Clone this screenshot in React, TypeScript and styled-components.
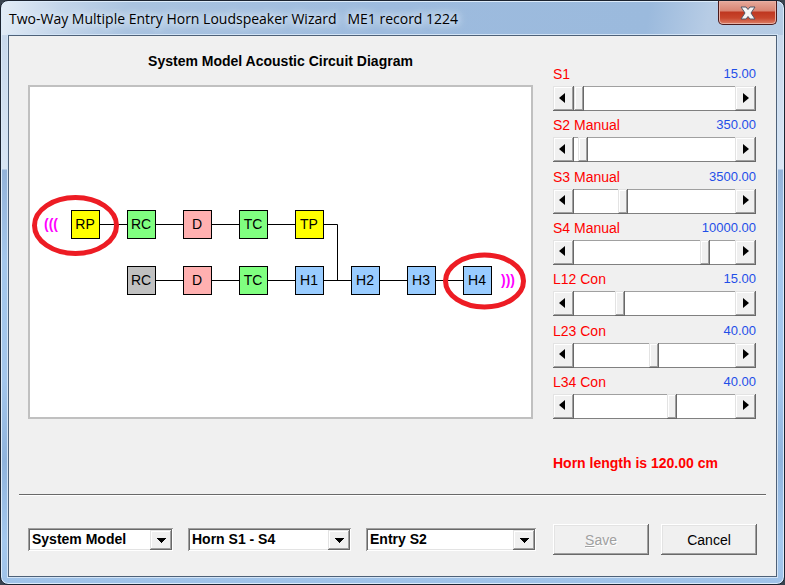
import { useState } from "react";
import styled, { createGlobalStyle } from "styled-components";

const GlobalStyle = createGlobalStyle`
  *, *::before, *::after { box-sizing: border-box; }
  body {
    margin: 0;
    background: #39434f;
    font-family: "Liberation Sans", Arial, sans-serif;
    font-size: 14px;
    color: #000;
  }
`;

const raised = `
  background: #f0f0f0;
  box-shadow:
    inset -1px -1px #696969,
    inset 1px 1px #e3e3e3,
    inset -2px -2px #a0a0a0,
    inset 2px 2px #fff;
`;

const Window = styled.main`
  display: flex;
  flex-direction: column;
  min-height: 100vh;
  padding: 0 7px 7px;
  border: 1px solid #1b2330;
  border-radius: 8px;
  box-shadow: inset 0 0 0 1px #dcebfa;
  background:
    linear-gradient(100deg, #e4edf7 0, #c3d5ea 60px, #a9c3e0 130px, #9dbbde 380px, #9bbadd 640px, #b7cce5 700px, #b5cbe4 100%) 0 0 / 100% 34px no-repeat,
    linear-gradient(#c4d5ea 0, #d9e6f4 168px, #93b2d8 169px, #a4c7ec 260px, #a3c6ec 380px, #8fb3dc 460px, #a4c8ee 540px, #9fc2e8 100%);
`;

const TitleBar = styled.header`
  display: flex;
  align-items: flex-start;
  justify-content: space-between;
  height: 34px;
`;

const Caption = styled.h1`
  margin: 0;
  padding-left: 1px;
  font: 400 14px/36px "Open Sans", "Noto Sans", sans-serif;
  white-space: pre;
  text-shadow: 0 0 8px #e8f1fb, 0 0 12px #dce9f7, 0 0 6px #dce9f7;
`;

const CloseButton = styled.button`
  display: grid;
  place-items: center;
  width: 59px;
  height: 24px;
  padding: 0;
  border: 1px solid #4a1a1c;
  border-top: 0;
  border-radius: 0 0 5px 5px;
  box-shadow: inset 0 0 0 1px #e9b0a4;
  background: linear-gradient(#e6a99b 0, #d98472 10px, #bf3620 11px, #c8452c 17px, #dd8069 100%);
`;

const Client = styled.div`
  flex: 1;
  display: flex;
  flex-direction: column;
  padding: 16px 0 20px;
  border: 1px solid #4e6178;
  box-shadow: 0 0 0 1px #d3e4f6;
  background: #f0f0f0;
`;

const Content = styled.div`
  display: grid;
  grid-template-columns: minmax(0, 1fr) 204px;
  gap: 20px;
  padding: 0 19px;
`;

const ModelPanel = styled.section`
  display: flex;
  flex-direction: column;
`;

const PanelTitle = styled.h2`
  margin: 0 0 15px;
  font-size: 14px;
  line-height: 18px;
  text-align: center;
`;

const DiagramBox = styled.div`
  flex: 1;
  border: 2px solid #c0c0c0;
  background: #fff;
`;

const DiagramSvg = styled.svg`
  display: block;
  width: 100%;
  font-size: 14px;
`;

const Controls = styled.section`
  display: flex;
  flex-direction: column;
  justify-content: space-between;
  height: 367px;
  padding: 10px 1px 0 0;
`;

const SliderHead = styled.div`
  display: flex;
  justify-content: space-between;
  line-height: 24px;
`;

const SliderLabel = styled.label`
  color: #f00;
`;

const SliderValue = styled.output`
  color: #1f4fe8;
  font-size: 13px;
`;

const ScrollBar = styled.div`
  display: flex;
  height: 25px;
`;

const ArrowButton = styled.button<{ $side: "left" | "right" }>`
  display: grid;
  place-items: center;
  width: 21px;
  padding: ${({ $side }) => ($side === "left" ? "0 3px 2px 0" : "0 0 2px 1px")};
  border: 0;
  ${raised}
`;

const Range = styled.input`
  flex: 1;
  min-width: 0;
  height: 25px;
  margin: 0;
  appearance: none;
  border: solid #a0a0a0;
  border-width: 1px 0;
  border-bottom-color: #808080;
  background: #fff;

  &::-webkit-slider-runnable-track {
    height: 25px;
    margin: -1px 0;
  }
  &::-webkit-slider-thumb {
    appearance: none;
    width: 10px;
    height: 25px;
    border-radius: 0;
    ${raised}
  }
`;

const Result = styled.p`
  margin: 35px 0 0;
  color: #f00;
  font-weight: 700;
  line-height: 18px;
`;

const Rule = styled.hr`
  width: calc(100% - 20px);
  height: 2px;
  margin: 22px 10px 28px;
  border: 0;
  border-top: 1px solid #696969;
  border-bottom: 1px solid #fff;
`;

const Footer = styled.footer`
  display: flex;
  align-items: center;
  gap: 17px;
  padding: 0 19px;
`;

const Selects = styled.div`
  flex: 1;
  display: grid;
  grid-template-columns: 145fr 163fr 170fr;
  gap: 15px;
`;

const Combo = styled.div`
  display: grid;
  grid-template-columns: 1fr 23px;
  height: 23px;
`;

const Select = styled.select`
  grid-area: 1 / 1 / 2 / 3;
  min-width: 0;
  padding: 0 24px 0 4px;
  appearance: none;
  border: 0;
  border-radius: 0;
  background: #fff;
  box-shadow:
    inset 1px 1px #a0a0a0,
    inset -1px -1px #fff,
    inset 2px 2px #696969,
    inset -2px -2px #e3e3e3;
  color: #000;
  font: 700 14px/23px "Liberation Sans", Arial, sans-serif;
`;

const ComboArrow = styled.span`
  grid-area: 1 / 2;
  display: grid;
  place-items: center;
  margin: 2px 1px 1px 0;
  pointer-events: none;
  ${raised}
`;

const Actions = styled.div`
  display: flex;
  gap: 12px;
`;

const ActionButton = styled.button`
  width: 96px;
  height: 31px;
  padding: 0;
  border: 0;
  background: #f0f0f0;
  box-shadow:
    inset -1px -1px #696969,
    inset 1px 1px #fff,
    inset -2px -2px #a0a0a0,
    inset 2px 2px #e3e3e3;
  color: #000;
  font: 400 14px "Liberation Sans", Arial, sans-serif;

  &:disabled {
    color: #a0a0a0;
    text-shadow: 1px 1px #fff;
  }
`;

type Parameter = { id: string; label: string; value: string; position: number };

const parameters: Parameter[] = [
  { id: "s1", label: "S1", value: "15.00", position: 0 },
  { id: "s2", label: "S2 Manual", value: "350.00", position: 4 },
  { id: "s3", label: "S3 Manual", value: "3500.00", position: 44 },
  { id: "s4", label: "S4 Manual", value: "10000.00", position: 126 },
  { id: "l12", label: "L12 Con", value: "15.00", position: 41 },
  { id: "l23", label: "L23 Con", value: "40.00", position: 75 },
  { id: "l34", label: "L34 Con", value: "40.00", position: 93 },
];

const TRAVEL = 151;

function ParameterSlider({ id, label, value, position }: Parameter) {
  const [pos, setPos] = useState(position);
  const step = (by: number) => setPos((p) => Math.min(TRAVEL, Math.max(0, p + by)));
  return (
    <div>
      <SliderHead>
        <SliderLabel htmlFor={id}>{label}</SliderLabel>
        <SliderValue htmlFor={id}>{value}</SliderValue>
      </SliderHead>
      <ScrollBar>
        <ArrowButton type="button" $side="left" aria-label={`Decrease ${label}`} onClick={() => step(-1)}>
          <svg width="6" height="10">
            <path d="M6 0V10L0 5Z" />
          </svg>
        </ArrowButton>
        <Range
          id={id}
          type="range"
          min={0}
          max={TRAVEL}
          value={pos}
          onChange={(e) => setPos(Number(e.target.value))}
        />
        <ArrowButton type="button" $side="right" aria-label={`Increase ${label}`} onClick={() => step(1)}>
          <svg width="6" height="10">
            <path d="M0 0V10L6 5Z" />
          </svg>
        </ArrowButton>
      </ScrollBar>
    </div>
  );
}

const YELLOW = "#ffff00";
const GREEN = "#80ff80";
const PINK = "#ffb0b0";
const BLUE = "#99ccff";
const GREY = "#c0c0c0";

const nodes = [
  { name: "RP", col: 0, row: 0, fill: YELLOW },
  { name: "RC", col: 1, row: 0, fill: GREEN },
  { name: "D", col: 2, row: 0, fill: PINK },
  { name: "TC", col: 3, row: 0, fill: GREEN },
  { name: "TP", col: 4, row: 0, fill: YELLOW },
  { name: "RC", col: 1, row: 1, fill: GREY },
  { name: "D", col: 2, row: 1, fill: PINK },
  { name: "TC", col: 3, row: 1, fill: GREEN },
  { name: "H1", col: 4, row: 1, fill: BLUE },
  { name: "H2", col: 5, row: 1, fill: BLUE },
  { name: "H3", col: 6, row: 1, fill: BLUE },
  { name: "H4", col: 7, row: 1, fill: BLUE },
];

function CircuitDiagram() {
  return (
    <DiagramSvg viewBox="0 0 501 329" role="img" aria-label="System model acoustic circuit diagram">
      <path d="M55.5 137.5H307.5V193.5M111.5 193.5H447.5" fill="none" stroke="#000" />
      {nodes.map(({ name, col, row, fill }) => (
        <g key={`${row}-${col}`} transform={`translate(${41 + col * 56} ${123 + row * 56})`}>
          <rect x="0.5" y="0.5" width="28" height="28" fill={fill} stroke="#000" />
          <text x="14" y="19" textAnchor="middle">
            {name}
          </text>
        </g>
      ))}
      <g fill="#f0f" fontWeight="700">
        <text x="14" y="142">(((</text>
        <text x="471" y="198">)))</text>
      </g>
      <g fill="none" stroke="#ed1c24" strokeWidth="5">
        <ellipse cx="45.5" cy="138.5" rx="41" ry="28" />
        <ellipse cx="454.5" cy="194" rx="39" ry="26" />
      </g>
    </DiagramSvg>
  );
}

function ComboBox({ label, options }: { label: string; options: string[] }) {
  return (
    <Combo>
      <Select aria-label={label} defaultValue={options[0]}>
        {options.map((option) => (
          <option key={option}>{option}</option>
        ))}
      </Select>
      <ComboArrow>
        <svg width="9" height="5" shapeRendering="crispEdges">
          <path d="M0 0H9L4.5 5Z" />
        </svg>
      </ComboArrow>
    </Combo>
  );
}

export default function App() {
  return (
    <>
      <GlobalStyle />
      <Window>
        <TitleBar>
          <Caption>Two-Way Multiple Entry Horn Loudspeaker Wizard   ME1 record 1224</Caption>
          <CloseButton type="button" aria-label="Close">
            <svg width="16" height="14" viewBox="0 0 16 14">
              <path
                d="M1 1H6L8 3.5L10 1H15L11 7L15 13H10L8 10.5L6 13H1L5 7Z"
                fill="#f5f5f5"
                stroke="#535666"
                strokeLinejoin="round"
              />
            </svg>
          </CloseButton>
        </TitleBar>
        <Client>
          <Content>
            <ModelPanel>
              <PanelTitle>System Model Acoustic Circuit Diagram</PanelTitle>
              <DiagramBox>
                <CircuitDiagram />
              </DiagramBox>
            </ModelPanel>
            <Controls>
              {parameters.map((p) => (
                <ParameterSlider key={p.id} {...p} />
              ))}
            </Controls>
          </Content>
          <Content>
            <span />
            <Result>Horn length is 120.00 cm</Result>
          </Content>
          <Rule />
          <Footer>
            <Selects>
              <ComboBox label="Diagram" options={["System Model"]} />
              <ComboBox label="Horn segment" options={["Horn S1 - S4"]} />
              <ComboBox label="Entry point" options={["Entry S2"]} />
            </Selects>
            <Actions>
              <ActionButton type="button" disabled>
                <u>S</u>ave
              </ActionButton>
              <ActionButton type="button">Cancel</ActionButton>
            </Actions>
          </Footer>
        </Client>
      </Window>
    </>
  );
}
